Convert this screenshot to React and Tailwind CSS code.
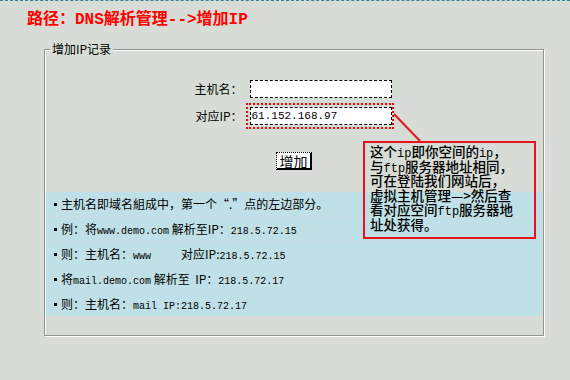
const mono = "font-['Liberation_Mono',monospace] text-[10px]";
const cmono = "font-['Liberation_Mono',monospace] text-[12px] leading-none";

const rows = [
  <>主机名即域名組成中，第一个“.”点的左边部分。</>,
  <>例：将<span className={mono}>www.demo.com</span> 解析至IP：<span className={mono}>218.5.72.15</span></>,
  <>则：主机名：<span className={`${mono} whitespace-pre`}>www     </span>对应IP:<span className={mono}>218.5.72.15</span></>,
  <>将<span className={mono}>mail.demo.com</span> 解析至<span className="whitespace-pre">  </span>IP：<span className={mono}>218.5.72.17</span></>,
  <>则：主机名：<span className={mono}>mail IP:218.5.72.17</span></>,
];

const note = [
  <>这个<span className={cmono}>ip</span>即你空间的<span className={cmono}>ip</span>，</>,
  <>与<span className={cmono}>ftp</span>服务器地址相同，</>,
  <>可在登陆我们网站后，</>,
  <>虚拟主机管理—&gt;然后查</>,
  <>看对应空间<span className={cmono}>ftp</span>服务器地</>,
  <>址处获得。</>,
];

export default function App() {
  return (
    <div className="relative w-[570px] h-[380px] overflow-hidden bg-[#d7ddd6] font-['Noto_Sans_CJK_SC',sans-serif] text-black">
      <div className="h-px border-t border-dashed border-[#2f8696]" />

      <h1 className="ml-[27px] mt-[9px] text-[16px] leading-[20px] font-bold text-[#ff0000] font-['Liberation_Mono','Noto_Sans_CJK_SC',monospace]">
        路径：DNS解析管理--&gt;增加IP
      </h1>

      {/* 增加IP记录 */}
      <fieldset className="ml-[44px] mt-[13px] w-[500px] border border-[#8d958d] shadow-[inset_1px_1px_0_#ffffff,1px_1px_0_#ffffff]">
        <legend className="ml-[5px] px-[2px] text-[12px] leading-[12px] bg-[#d7ddd6]">增加IP记录</legend>

        <div className="pt-[25px] flex flex-col items-center">
          <div className="grid grid-cols-[auto_auto] gap-x-[3px] items-center text-[12px]">
            <span className="text-right">主机名：</span>
            <div className="ml-[4px] w-[142px] h-[18px] bg-white border border-dashed border-black" />
            <span className="text-right mt-[5px]">对应IP：</span>
            <div className="mt-[5px] w-[148px] border-2 border-dotted border-[#ff0000] pl-[2px] py-[2px]">
              <div className="w-[142px] h-[18px] bg-white border border-dashed border-black flex items-center pl-[1px] font-['Liberation_Mono',monospace] text-[11px]">
                61.152.168.97
              </div>
            </div>
          </div>

          <button className="mt-[23px] w-[36px] h-[18px] bg-white border border-dotted border-black [border-right-style:solid] [border-bottom-style:solid] border-r-2 border-b-2 text-[14px] leading-none flex items-center justify-center">
            增加
          </button>
        </div>

        <div className="mt-[22px] mx-[1px] mb-[19px] flex flex-col gap-px bg-[#cadfe2] text-[12px]">
          {rows.map((r, i) => (
            <div key={i} className="h-[24px] bg-[#bee0e6] flex items-center pl-[8px]">
              <span className="w-[3px] h-[3px] bg-black mr-[4px] shrink-0" />
              <span className="whitespace-nowrap">{r}</span>
            </div>
          ))}
        </div>
      </fieldset>

      <svg className="absolute left-[390px] top-[110px]" width="35" height="35" viewBox="0 0 35 35">
        <line x1="4" y1="4" x2="30" y2="31" stroke="#e8141c" strokeWidth="2" />
      </svg>

      <div className="absolute left-[363px] top-[141px] w-[173px] h-[98px] border-2 border-[#e8141c] pl-[5px] pt-px text-[13.5px] font-medium">
        {note.map((l, i) => (
          <div key={i} className="h-[14.5px] leading-[14.5px] whitespace-nowrap">{l}</div>
        ))}
      </div>
    </div>
  );
}
